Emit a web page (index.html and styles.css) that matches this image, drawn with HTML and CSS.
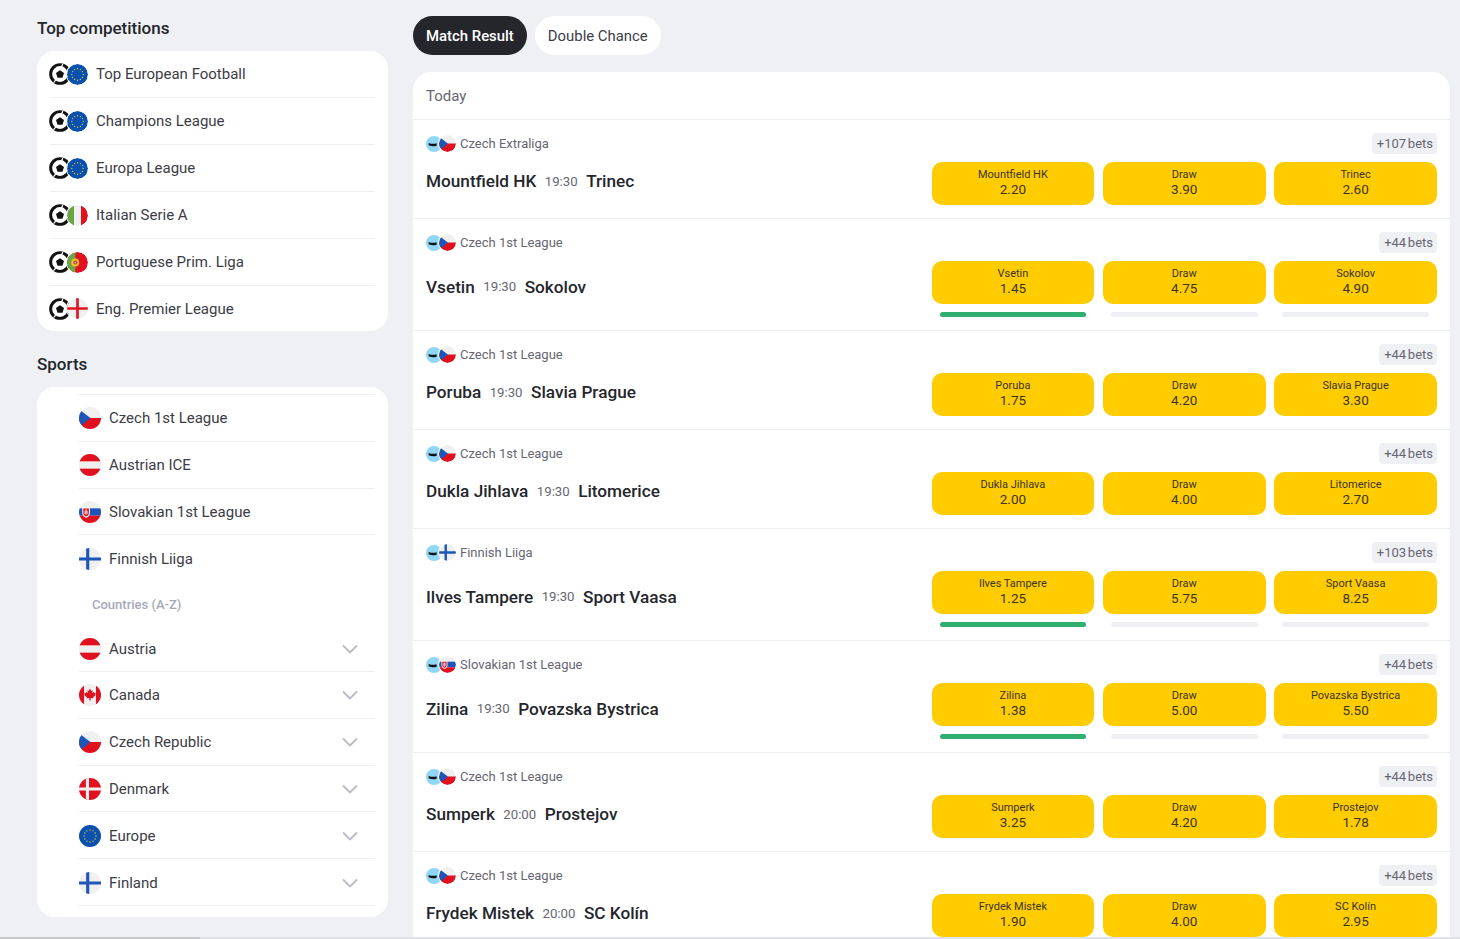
FILE: index.html
```html
<!DOCTYPE html>
<html>
<head>
<meta charset="utf-8">
<title>Ice hockey</title>
<link rel="stylesheet" href="styles.css">
</head>
<body>

<svg class="iconDefs" xmlns="http://www.w3.org/2000/svg">
    <defs>
        <clipPath id="disc"><circle cx="12" cy="12" r="12"/></clipPath>
    </defs>
    <symbol id="ball" viewBox="0 0 24 24">
        <circle cx="12" cy="12" r="10.2" fill="#fff" stroke="#111" stroke-width="3.200"/>
        <path d="M12 7.800l4.400 3.200-1.700 5.200H9.300L7.600 11z" fill="#111"/>
        <path d="M15 1l-1.500 4M22.500 15l-4-1M5 21.500l2.500-3" stroke="#fff" stroke-width="1.400"/>
    </symbol>
    <symbol id="puck" viewBox="0 0 24 24">
        <circle cx="12" cy="12" r="12" fill="#8fd6f7"/>
        <path d="M4 10.500c4 1.600 8 1.600 12 .5v3.500c-4 1.400-8 1-12-.5z" fill="#111"/>
    </symbol>
    <symbol id="eu" viewBox="0 0 24 24">
        <circle cx="12" cy="12" r="12" fill="#0a50ad"/>
        <g fill="#d8c84a">
            <circle cx="12" cy="5.500" r=".8"/><circle cx="15.300" cy="6.400" r=".8"/><circle cx="17.600" cy="8.700" r=".8"/>
            <circle cx="18.500" cy="12" r=".8"/><circle cx="17.600" cy="15.300" r=".8"/><circle cx="15.300" cy="17.600" r=".8"/>
            <circle cx="12" cy="18.500" r=".8"/><circle cx="8.700" cy="17.600" r=".8"/><circle cx="6.400" cy="15.300" r=".8"/>
            <circle cx="5.500" cy="12" r=".8"/><circle cx="6.400" cy="8.700" r=".8"/><circle cx="8.700" cy="6.400" r=".8"/>
        </g>
    </symbol>
    <symbol id="it" viewBox="0 0 24 24">
        <g clip-path="url(#disc)">
            <rect width="24" height="24" fill="#f0f0f0"/>
            <rect width="8" height="24" fill="#6da544"/>
            <rect x="16" width="8" height="24" fill="#e0101f"/>
        </g>
    </symbol>
    <symbol id="pt" viewBox="0 0 24 24">
        <g clip-path="url(#disc)">
            <rect width="24" height="24" fill="#e0101f"/>
            <rect width="9.500" height="24" fill="#6da544"/>
            <circle cx="9.500" cy="12" r="4.500" fill="#f2c42c"/>
            <circle cx="9.500" cy="12" r="2.300" fill="#d8202c"/>
            <circle cx="9.500" cy="12" r="1" fill="#f0f0f0"/>
        </g>
    </symbol>
    <symbol id="en" viewBox="0 0 24 24">
        <g clip-path="url(#disc)">
            <rect width="24" height="24" fill="#f0f0f0"/>
            <path d="M10.500 0h3v24h-3zM0 10.500h24v3H0z" fill="#e0101f"/>
        </g>
    </symbol>
    <symbol id="cz" viewBox="0 0 24 24">
        <g clip-path="url(#disc)">
            <rect width="24" height="24" fill="#f0f0f0"/>
            <rect y="12" width="24" height="12" fill="#e0101f"/>
            <path d="M0 2.500L12.500 12 3 20 0 20z" fill="#1d55b8"/>
        </g>
    </symbol>
    <symbol id="at" viewBox="0 0 24 24">
        <g clip-path="url(#disc)">
            <rect width="24" height="24" fill="#f0f0f0"/>
            <rect width="24" height="8" fill="#e0101f"/>
            <rect y="16" width="24" height="8" fill="#e0101f"/>
        </g>
    </symbol>
    <symbol id="sk" viewBox="0 0 24 24">
        <g clip-path="url(#disc)">
            <rect width="24" height="24" fill="#f0f0f0"/>
            <rect y="8" width="24" height="8" fill="#1d55b8"/>
            <rect y="16" width="24" height="8" fill="#e0101f"/>
            <path d="M3.500 7h8.500v6c0 3-2.500 4.500-4.200 5.500C6 17.500 3.500 16 3.500 13z" fill="#f0f0f0"/>
            <path d="M4.700 8.200h6.100v4.800c0 2-1.700 3.200-3 4-1.400-.8-3.100-2-3.100-4z" fill="#e0101f"/>
            <path d="M7.200 9h1v1.500h1.500v1H8.200v1h1.800v1H8.200V15h-1v-1.500H5.500v-1h1.700v-1H5.800v-1h1.400z" fill="#f0f0f0"/>
        </g>
    </symbol>
    <symbol id="fi" viewBox="0 0 24 24">
        <g clip-path="url(#disc)">
            <rect width="24" height="24" fill="#f0f0f0"/>
            <path d="M7.800 0h3.400v24H7.800zM0 10.300h24v3.400H0z" fill="#1d55b8"/>
        </g>
    </symbol>
    <symbol id="ca" viewBox="0 0 24 24">
        <g clip-path="url(#disc)">
            <rect width="24" height="24" fill="#f0f0f0"/>
            <rect width="5.500" height="24" fill="#e0101f"/>
            <rect x="18.500" width="5.500" height="24" fill="#e0101f"/>
            <path d="M12 5l1.300 2.500 1.500-.7-.5 3.200 1.600-1.500.5 1.300 1.800-.3-.6 2 .7.500-2.900 2.400.3 1.200-3-.4V18h-1.400v-2.800l-3 .4.300-1.200-2.900-2.400.7-.5-.6-2 1.800.3.500-1.300 1.600 1.500-.5-3.200 1.500.7z" fill="#e0101f"/>
        </g>
    </symbol>
    <symbol id="dk" viewBox="0 0 24 24">
        <g clip-path="url(#disc)">
            <rect width="24" height="24" fill="#e0101f"/>
            <path d="M7.500 0h3.400v24H7.500zM0 10.300h24v3.400H0z" fill="#f0f0f0"/>
        </g>
    </symbol>
    <symbol id="chevron" viewBox="0 0 16 10">
        <path d="M1 1.500l7 7 7-7" fill="none" stroke="#b9bbc4" stroke-width="1.800"/>
    </symbol>
</svg>

<div class="page">

    <div class="sideColumn">
        <h2 class="sideTitle">Top competitions</h2>
        <div class="sideCard topCard">
            <a class="topRow"><span class="pairIcon"><svg class="pairBall"><use href="#ball"/></svg><svg class="pairFlag"><use href="#eu"/></svg></span>Top European Football</a>
            <a class="topRow"><span class="pairIcon"><svg class="pairBall"><use href="#ball"/></svg><svg class="pairFlag"><use href="#eu"/></svg></span>Champions League</a>
            <a class="topRow"><span class="pairIcon"><svg class="pairBall"><use href="#ball"/></svg><svg class="pairFlag"><use href="#eu"/></svg></span>Europa League</a>
            <a class="topRow"><span class="pairIcon"><svg class="pairBall"><use href="#ball"/></svg><svg class="pairFlag"><use href="#it"/></svg></span>Italian Serie A</a>
            <a class="topRow"><span class="pairIcon"><svg class="pairBall"><use href="#ball"/></svg><svg class="pairFlag"><use href="#pt"/></svg></span>Portuguese Prim. Liga</a>
            <a class="topRow"><span class="pairIcon"><svg class="pairBall"><use href="#ball"/></svg><svg class="pairFlag"><use href="#en"/></svg></span>Eng. Premier League</a>
        </div>

        <h2 class="sideTitle sportsTitle">Sports</h2>
        <div class="sideCard sportsCard">
            <a class="sportRow"><svg class="sportFlag"><use href="#cz"/></svg>Czech 1st League</a>
            <a class="sportRow"><svg class="sportFlag"><use href="#at"/></svg>Austrian ICE</a>
            <a class="sportRow"><svg class="sportFlag"><use href="#sk"/></svg>Slovakian 1st League</a>
            <a class="sportRow noLine"><svg class="sportFlag"><use href="#fi"/></svg>Finnish Liiga</a>
            <div class="countriesLabel">Countries (A-Z)</div>
            <a class="sportRow"><svg class="sportFlag"><use href="#at"/></svg>Austria<svg class="chevron"><use href="#chevron"/></svg></a>
            <a class="sportRow"><svg class="sportFlag"><use href="#ca"/></svg>Canada<svg class="chevron"><use href="#chevron"/></svg></a>
            <a class="sportRow"><svg class="sportFlag"><use href="#cz"/></svg>Czech Republic<svg class="chevron"><use href="#chevron"/></svg></a>
            <a class="sportRow"><svg class="sportFlag"><use href="#dk"/></svg>Denmark<svg class="chevron"><use href="#chevron"/></svg></a>
            <a class="sportRow"><svg class="sportFlag"><use href="#eu"/></svg>Europe<svg class="chevron"><use href="#chevron"/></svg></a>
            <a class="sportRow"><svg class="sportFlag"><use href="#fi"/></svg>Finland<svg class="chevron"><use href="#chevron"/></svg></a>
        </div>
    </div>

    <div class="mainColumn">
        <div class="tabs">
            <div class="tab tabActive">Match Result</div>
            <div class="tab">Double Chance</div>
        </div>

        <div class="matchCard">
            <div class="dayTitle">Today</div>

            <div class="matchRow">
                <div class="matchTop">
                    <div class="league"><span class="leagueIcons"><svg class="leaguePuck"><use href="#puck"/></svg><svg class="leagueFlag"><use href="#cz"/></svg></span>Czech Extraliga</div>
                    <div class="betsBadge">+107 bets</div>
                </div>
                <div class="matchBody">
                    <div class="teams"><span class="team">Mountfield HK</span><span class="kickoff">19:30</span><span class="team">Trinec</span></div>
                    <div class="odds">
                        <div class="oddCell"><div class="oddBtn"><span class="oddName">Mountfield HK</span><span class="oddValue">2.20</span></div></div>
                        <div class="oddCell"><div class="oddBtn"><span class="oddName">Draw</span><span class="oddValue">3.90</span></div></div>
                        <div class="oddCell"><div class="oddBtn"><span class="oddName">Trinec</span><span class="oddValue">2.60</span></div></div>
                    </div>
                </div>
            </div>

            <div class="matchRow">
                <div class="matchTop">
                    <div class="league"><span class="leagueIcons"><svg class="leaguePuck"><use href="#puck"/></svg><svg class="leagueFlag"><use href="#cz"/></svg></span>Czech 1st League</div>
                    <div class="betsBadge">+44 bets</div>
                </div>
                <div class="matchBody">
                    <div class="teams"><span class="team">Vsetin</span><span class="kickoff">19:30</span><span class="team">Sokolov</span></div>
                    <div class="odds">
                        <div class="oddCell"><div class="oddBtn"><span class="oddName">Vsetin</span><span class="oddValue">1.45</span></div><div class="trend trendOn"></div></div>
                        <div class="oddCell"><div class="oddBtn"><span class="oddName">Draw</span><span class="oddValue">4.75</span></div><div class="trend"></div></div>
                        <div class="oddCell"><div class="oddBtn"><span class="oddName">Sokolov</span><span class="oddValue">4.90</span></div><div class="trend"></div></div>
                    </div>
                </div>
            </div>

            <div class="matchRow">
                <div class="matchTop">
                    <div class="league"><span class="leagueIcons"><svg class="leaguePuck"><use href="#puck"/></svg><svg class="leagueFlag"><use href="#cz"/></svg></span>Czech 1st League</div>
                    <div class="betsBadge">+44 bets</div>
                </div>
                <div class="matchBody">
                    <div class="teams"><span class="team">Poruba</span><span class="kickoff">19:30</span><span class="team">Slavia Prague</span></div>
                    <div class="odds">
                        <div class="oddCell"><div class="oddBtn"><span class="oddName">Poruba</span><span class="oddValue">1.75</span></div></div>
                        <div class="oddCell"><div class="oddBtn"><span class="oddName">Draw</span><span class="oddValue">4.20</span></div></div>
                        <div class="oddCell"><div class="oddBtn"><span class="oddName">Slavia Prague</span><span class="oddValue">3.30</span></div></div>
                    </div>
                </div>
            </div>

            <div class="matchRow">
                <div class="matchTop">
                    <div class="league"><span class="leagueIcons"><svg class="leaguePuck"><use href="#puck"/></svg><svg class="leagueFlag"><use href="#cz"/></svg></span>Czech 1st League</div>
                    <div class="betsBadge">+44 bets</div>
                </div>
                <div class="matchBody">
                    <div class="teams"><span class="team">Dukla Jihlava</span><span class="kickoff">19:30</span><span class="team">Litomerice</span></div>
                    <div class="odds">
                        <div class="oddCell"><div class="oddBtn"><span class="oddName">Dukla Jihlava</span><span class="oddValue">2.00</span></div></div>
                        <div class="oddCell"><div class="oddBtn"><span class="oddName">Draw</span><span class="oddValue">4.00</span></div></div>
                        <div class="oddCell"><div class="oddBtn"><span class="oddName">Litomerice</span><span class="oddValue">2.70</span></div></div>
                    </div>
                </div>
            </div>

            <div class="matchRow">
                <div class="matchTop">
                    <div class="league"><span class="leagueIcons"><svg class="leaguePuck"><use href="#puck"/></svg><svg class="leagueFlag"><use href="#fi"/></svg></span>Finnish Liiga</div>
                    <div class="betsBadge">+103 bets</div>
                </div>
                <div class="matchBody">
                    <div class="teams"><span class="team">Ilves Tampere</span><span class="kickoff">19:30</span><span class="team">Sport Vaasa</span></div>
                    <div class="odds">
                        <div class="oddCell"><div class="oddBtn"><span class="oddName">Ilves Tampere</span><span class="oddValue">1.25</span></div><div class="trend trendOn"></div></div>
                        <div class="oddCell"><div class="oddBtn"><span class="oddName">Draw</span><span class="oddValue">5.75</span></div><div class="trend"></div></div>
                        <div class="oddCell"><div class="oddBtn"><span class="oddName">Sport Vaasa</span><span class="oddValue">8.25</span></div><div class="trend"></div></div>
                    </div>
                </div>
            </div>

            <div class="matchRow">
                <div class="matchTop">
                    <div class="league"><span class="leagueIcons"><svg class="leaguePuck"><use href="#puck"/></svg><svg class="leagueFlag"><use href="#sk"/></svg></span>Slovakian 1st League</div>
                    <div class="betsBadge">+44 bets</div>
                </div>
                <div class="matchBody">
                    <div class="teams"><span class="team">Zilina</span><span class="kickoff">19:30</span><span class="team">Povazska Bystrica</span></div>
                    <div class="odds">
                        <div class="oddCell"><div class="oddBtn"><span class="oddName">Zilina</span><span class="oddValue">1.38</span></div><div class="trend trendOn"></div></div>
                        <div class="oddCell"><div class="oddBtn"><span class="oddName">Draw</span><span class="oddValue">5.00</span></div><div class="trend"></div></div>
                        <div class="oddCell"><div class="oddBtn"><span class="oddName">Povazska Bystrica</span><span class="oddValue">5.50</span></div><div class="trend"></div></div>
                    </div>
                </div>
            </div>

            <div class="matchRow">
                <div class="matchTop">
                    <div class="league"><span class="leagueIcons"><svg class="leaguePuck"><use href="#puck"/></svg><svg class="leagueFlag"><use href="#cz"/></svg></span>Czech 1st League</div>
                    <div class="betsBadge">+44 bets</div>
                </div>
                <div class="matchBody">
                    <div class="teams"><span class="team">Sumperk</span><span class="kickoff">20:00</span><span class="team">Prostejov</span></div>
                    <div class="odds">
                        <div class="oddCell"><div class="oddBtn"><span class="oddName">Sumperk</span><span class="oddValue">3.25</span></div></div>
                        <div class="oddCell"><div class="oddBtn"><span class="oddName">Draw</span><span class="oddValue">4.20</span></div></div>
                        <div class="oddCell"><div class="oddBtn"><span class="oddName">Prostejov</span><span class="oddValue">1.78</span></div></div>
                    </div>
                </div>
            </div>

            <div class="matchRow">
                <div class="matchTop">
                    <div class="league"><span class="leagueIcons"><svg class="leaguePuck"><use href="#puck"/></svg><svg class="leagueFlag"><use href="#cz"/></svg></span>Czech 1st League</div>
                    <div class="betsBadge">+44 bets</div>
                </div>
                <div class="matchBody">
                    <div class="teams"><span class="team">Frydek Mistek</span><span class="kickoff">20:00</span><span class="team">SC Kolín</span></div>
                    <div class="odds">
                        <div class="oddCell"><div class="oddBtn"><span class="oddName">Frydek Mistek</span><span class="oddValue">1.90</span></div></div>
                        <div class="oddCell"><div class="oddBtn"><span class="oddName">Draw</span><span class="oddValue">4.00</span></div></div>
                        <div class="oddCell"><div class="oddBtn"><span class="oddName">SC Kolín</span><span class="oddValue">2.95</span></div></div>
                    </div>
                </div>
            </div>
        </div>
    </div>
</div>

<div class="bottomEdge"><div class="bottomEdgeDark"></div></div>

</body>
</html>
```

FILE: styles.css
```css
html, body {
    margin: 0;
    height: 100%;
    overflow: hidden;
}

body {
    background-color: #eef0f4;
    font-family: Roboto, "Liberation Sans", sans-serif;
    color: #3c3c46;
}

.iconDefs {
    display: block;
    width: 0;
    height: 0;
}

.page {
    display: flex;
    column-gap: 25px;
    padding: 16px 10px 0 37px;
}

/* left column */
.sideColumn {
    flex: 0 0 351px;
}

.sideTitle {
    margin: 0 0 11px;
    height: 24px;
    line-height: 24px;
    font-size: 17px;
    font-weight: 500;
    color: #24262c;
}

.sportsTitle {
    margin-top: 21px;
}

.sideCard {
    background: white;
    border-radius: 18px;
    padding: 0 13px;
}

.topRow {
    display: flex;
    align-items: center;
    height: 46px;
    border-bottom: 1px solid #eceef1;
    font-size: 15px;
}

.topRow:last-child {
    height: 45px;
    border-bottom: none;
}

.pairIcon {
    display: flex;
    align-items: center;
    margin-left: -1px;
    margin-right: 8px;
}

.pairBall {
    width: 22px;
    height: 22px;
}

.pairFlag {
    width: 21px;
    height: 21px;
    margin-left: -4px;
    border-radius: 50%;
    box-shadow: 0 0 0 1px white;
}

.sportsCard {
    padding-top: 7px;
    padding-bottom: 11px;
}

.sportRow {
    display: flex;
    align-items: center;
    box-sizing: border-box;
    height: 46.8px;
    padding-top: 1px;
    margin-left: 29px;
    border-bottom: 1px solid #eceef1;
    font-size: 15px;
}

.sportRow:first-child {
    height: 47.8px;
    border-top: 1px solid #eceef1;
}

.noLine {
    border-bottom: none;
}

.sportFlag {
    width: 22px;
    height: 22px;
    margin-right: 8px;
}

.chevron {
    width: 16px;
    height: 10px;
    margin-left: auto;
    margin-right: 17px;
}

.countriesLabel {
    height: 42px;
    line-height: 43px;
    padding-top: 1px;
    margin-left: 42px;
    font-size: 13px;
    font-weight: 500;
    color: #a6a9b8;
}

/* right column */
.mainColumn {
    flex: 1;
    min-width: 0;
}

.tabs {
    display: flex;
    column-gap: 8px;
    margin-bottom: 17px;
}

.tab {
    height: 39px;
    line-height: 40px;
    padding: 0 13px;
    border-radius: 20px;
    background: white;
    font-size: 14.9px;
}

.tabActive {
    background: #24262c;
    color: white;
    font-weight: 500;
}

.matchCard {
    background: white;
    border-radius: 18px 18px 0 0;
}

.dayTitle {
    height: 47px;
    line-height: 48px;
    padding-left: 13px;
    border-bottom: 1px solid #eceef1;
    font-size: 15px;
    color: #666672;
}

.matchRow {
    padding: 13px;
    border-bottom: 1px solid #eceef1;
}

.matchTop {
    display: flex;
    justify-content: space-between;
    align-items: center;
    height: 21px;
    margin-bottom: 8px;
}

.league {
    display: flex;
    align-items: center;
    font-size: 13px;
    color: #666672;
}

.leagueIcons {
    display: flex;
    align-items: center;
    margin-right: 4px;
}

.leaguePuck {
    width: 16px;
    height: 16px;
}

.leagueFlag {
    width: 17px;
    height: 17px;
    margin-left: -3px;
    border-radius: 50%;
    box-shadow: 0 0 0 1px white;
}

.betsBadge {
    height: 21px;
    line-height: 21px;
    padding: 0 4px 0 5px;
    border-radius: 4px;
    background: #eef0f4;
    font-size: 13px;
    word-spacing: -1.5px;
    color: #666672;
}

.matchBody {
    display: flex;
    justify-content: space-between;
    align-items: center;
}

.teams {
    display: flex;
    align-items: center;
    column-gap: 8.5px;
    margin-bottom: 5px;
}

.team {
    font-size: 17.2px;
    font-weight: 500;
    color: #24262c;
}

.kickoff {
    font-size: 13.2px;
    color: #666672;
}

.odds {
    display: grid;
    grid-template-columns: repeat(3, 1fr);
    column-gap: 8.5px;
    width: 505.5px;
}

.oddBtn {
    display: flex;
    flex-direction: column;
    align-items: center;
    justify-content: center;
    box-sizing: border-box;
    height: 43px;
    padding-bottom: 4px;
    border-radius: 10px;
    background: #ffcc00;
    color: #3a3420;
}

.oddName {
    font-size: 11px;
    line-height: 14px;
}

.oddValue {
    font-size: 13.5px;
    line-height: 14px;
}

.trend {
    height: 5px;
    margin: 8px 8px 0;
    border-radius: 3px;
    background: #eef0f4;
}

.trendOn {
    background: #2fae6e;
}

.bottomEdge {
    position: fixed;
    left: 0;
    right: 0;
    bottom: 0;
    height: 2px;
    background: #e0e1e4;
}

.bottomEdgeDark {
    width: 200px;
    height: 100%;
    background: #c5c7c9;
}
```
